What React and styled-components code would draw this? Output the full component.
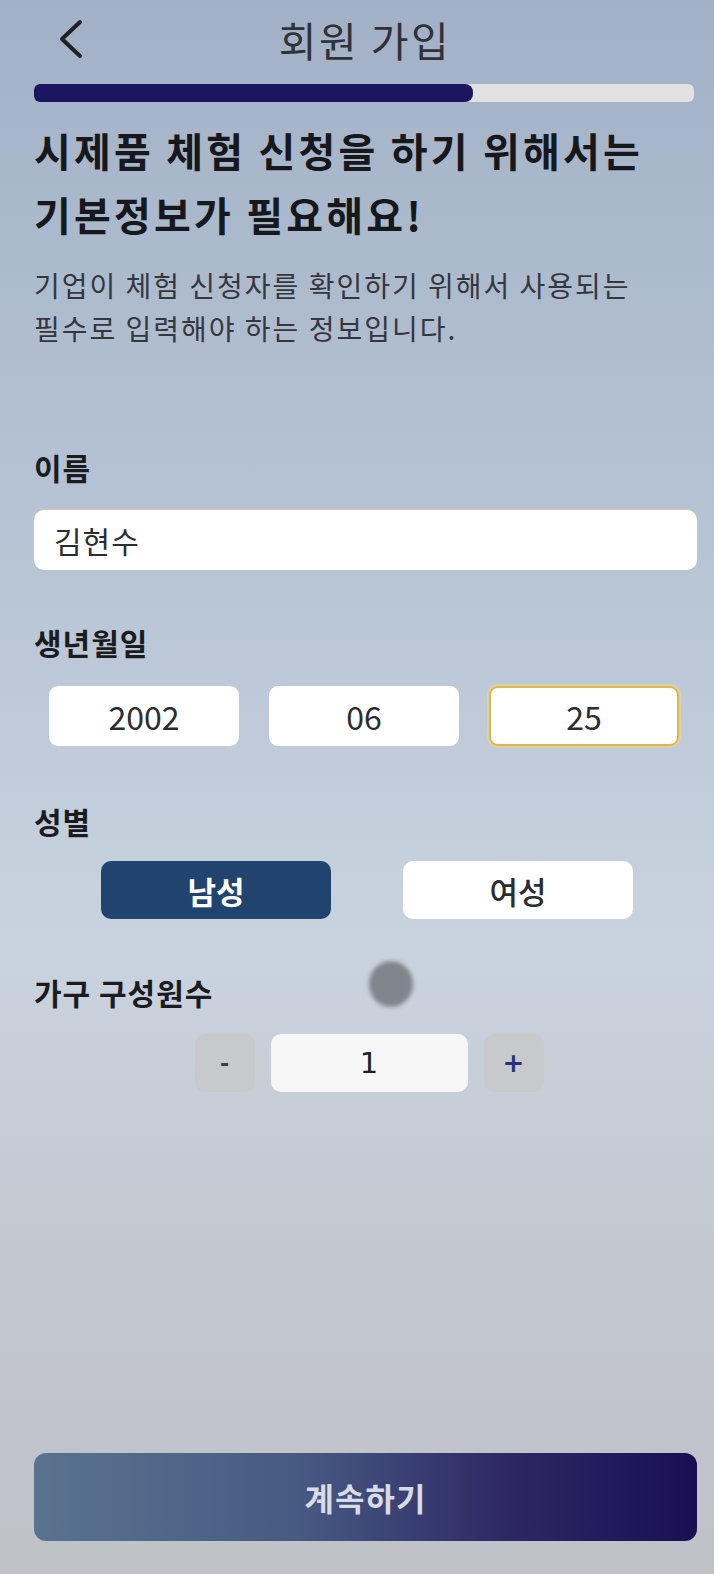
import React from "react";
import styled, { createGlobalStyle } from "styled-components";

const Global = createGlobalStyle`
  html, body { margin: 0; padding: 0; }
  body { font-family: "Noto Sans CJK KR", "Noto Sans", sans-serif; }
  * { box-sizing: border-box; }
`;

const Screen = styled.div`
  position: relative;
  width: 714px;
  min-height: 1574px;
  display: flex;
  flex-direction: column;
  padding: 0 17px 33px 34px;
  background: linear-gradient(
    180deg,
    #a2b1c6 0%,
    #b9c6d6 38%,
    #c9d3df 60%,
    #c3c8cf 80%,
    #bfc2c7 100%
  );
  color: #1d1f24;
  overflow: hidden;
`;

const Header = styled.header`
  display: grid;
  grid-template-columns: 1fr auto 1fr;
  align-items: center;
  height: 78px;
  margin-left: -34px;
  margin-right: -17px;
`;

const BackButton = styled.button`
  justify-self: start;
  margin-left: 56px;
  padding: 0;
  border: 0;
  background: none;
  display: flex;
  align-items: center;
  cursor: pointer;
`;

const Title = styled.h1`
  margin: 0 0 0 16px;
  font-size: 41px;
  font-weight: 400;
  color: #2f3238;
  letter-spacing: 2.5px;
`;

const Track = styled.div`
  height: 18px;
  margin-top: 6px;
  margin-right: 3px;
  border-radius: 6px;
  background: #e1e1e4;
  overflow: hidden;
  display: flex;
`;

const Fill = styled.div`
  height: 100%;
  background: #1c1560;
  border-radius: 0 8px 8px 0;
`;

const Heading = styled.h2`
  margin: 16px 0 0;
  font-size: 40px;
  font-weight: 700;
  line-height: 64px;
  color: #16181c;
  letter-spacing: 3.2px;
`;

const Sub = styled.p`
  margin: 18px 0 0;
  font-size: 28px;
  font-weight: 400;
  line-height: 43px;
  color: #34373d;
  letter-spacing: 2px;
`;

const Label = styled.div`
  margin-top: ${(p) => p.$mt}px;
  font-size: 30px;
  font-weight: 700;
  line-height: 36px;
  color: #1a1c20;
  letter-spacing: 1px;
`;

const TextField = styled.div`
  margin-top: 25px;
  height: 60px;
  border-radius: 10px;
  background: #ffffff;
  display: flex;
  align-items: center;
  padding-left: 20px;
  font-size: 30px;
  letter-spacing: 1px;
  color: #2b2d31;
  box-shadow: 0 -1px 0 rgba(255, 200, 160, 0.5);
`;

const DateRow = styled.div`
  margin: 26px 0 0 15px;
  display: grid;
  grid-template-columns: repeat(3, 190px);
  column-gap: 30px;
`;

const DateBox = styled.div`
  height: 60px;
  border-radius: 9px;
  background: #ffffff;
  display: flex;
  align-items: center;
  justify-content: center;
  font-size: 32px;
  color: #2b2d31;
  border: 2.5px solid ${(p) => (p.$focused ? "#e0b84a" : "transparent")};
  box-shadow: ${(p) =>
    p.$focused ? "0 0 0 2px rgba(245, 215, 130, 0.5)" : "none"};
`;

const GenderRow = styled.div`
  margin-top: 22px;
  display: flex;
  justify-content: center;
  gap: 72px;
  padding-left: 3px;
`;

const GenderButton = styled.button`
  width: 230px;
  height: 58px;
  border: 0;
  border-radius: 10px;
  font-family: inherit;
  font-size: 31px;
  font-weight: ${(p) => (p.$active ? 700 : 500)};
  color: ${(p) => (p.$active ? "#ffffff" : "#2b2d31")};
  background: ${(p) => (p.$active ? "#21446f" : "#ffffff")};
  cursor: pointer;
`;

const Stepper = styled.div`
  margin-top: 24px;
  display: flex;
  justify-content: center;
  gap: 16px;
  padding-left: 7px;
`;

const StepButton = styled.button`
  width: 60px;
  height: 58px;
  border: 0;
  border-radius: 10px;
  background: #c8c9cb;
  font-family: "DejaVu Sans", sans-serif;
  font-size: ${(p) => p.$size}px;
  font-weight: 700;
  color: ${(p) => p.$color};
  display: flex;
  align-items: center;
  justify-content: center;
  cursor: pointer;
`;

const StepValue = styled.div`
  width: 197px;
  height: 58px;
  border-radius: 10px;
  background: #f6f6f7;
  display: flex;
  align-items: center;
  justify-content: center;
  font-family: "DejaVu Sans", sans-serif;
  font-size: 29px;
  color: #1d1f24;
`;

const Spacer = styled.div`
  flex: 1;
`;

const ContinueButton = styled.button`
  height: 88px;
  width: 100%;
  margin-right: 3px;
  border: 0;
  border-radius: 12px;
  background: linear-gradient(90deg, #5a7390 0%, #475a82 40%, #2e2a66 70%, #1a0f52 100%);
  font-family: inherit;
  font-size: 32px;
  font-weight: 700;
  color: #d7dbe5;
  letter-spacing: 1px;
  cursor: pointer;
`;

const TouchDot = styled.div`
  position: absolute;
  left: 369px;
  top: 961px;
  width: 44px;
  height: 46px;
  border-radius: 50%;
  background: #80848c;
  filter: blur(2px);
  pointer-events: none;
`;

export default function App() {
  const progress = 66.5;
  return (
    <>
      <Global />
      <Screen>
        <Header>
          <BackButton aria-label="뒤로">
            <svg width="30" height="40" viewBox="0 0 30 40">
              <polyline
                points="24,3 6,20 24,37"
                fill="none"
                stroke="#1f2125"
                strokeWidth="4"
                strokeLinecap="round"
                strokeLinejoin="round"
              />
            </svg>
          </BackButton>
          <Title>회원 가입</Title>
          <div />
        </Header>
        <Track>
          <Fill style={{ width: `${progress}%` }} />
        </Track>
        <Heading>
          시제품 체험 신청을 하기 위해서는
          <br />
          기본정보가 필요해요!
        </Heading>
        <Sub>
          기업이 체험 신청자를 확인하기 위해서 사용되는
          <br />
          필수로 입력해야 하는 정보입니다.
        </Sub>

        <Label $mt={99}>이름</Label>
        <TextField>김현수</TextField>

        <Label $mt={54}>생년월일</Label>
        <DateRow>
          <DateBox>2002</DateBox>
          <DateBox>06</DateBox>
          <DateBox $focused>25</DateBox>
        </DateRow>

        <Label $mt={57}>성별</Label>
        <GenderRow>
          <GenderButton $active>남성</GenderButton>
          <GenderButton>여성</GenderButton>
        </GenderRow>

        <Label $mt={55}>가구 구성원수</Label>
        <Stepper>
          <StepButton $color="#3a3d44" $size={22}>-</StepButton>
          <StepValue>1</StepValue>
          <StepButton $color="#23347a" $size={26}>+</StepButton>
        </Stepper>

        <Spacer />
        <ContinueButton>계속하기</ContinueButton>
        <TouchDot />
      </Screen>
    </>
  );
}
